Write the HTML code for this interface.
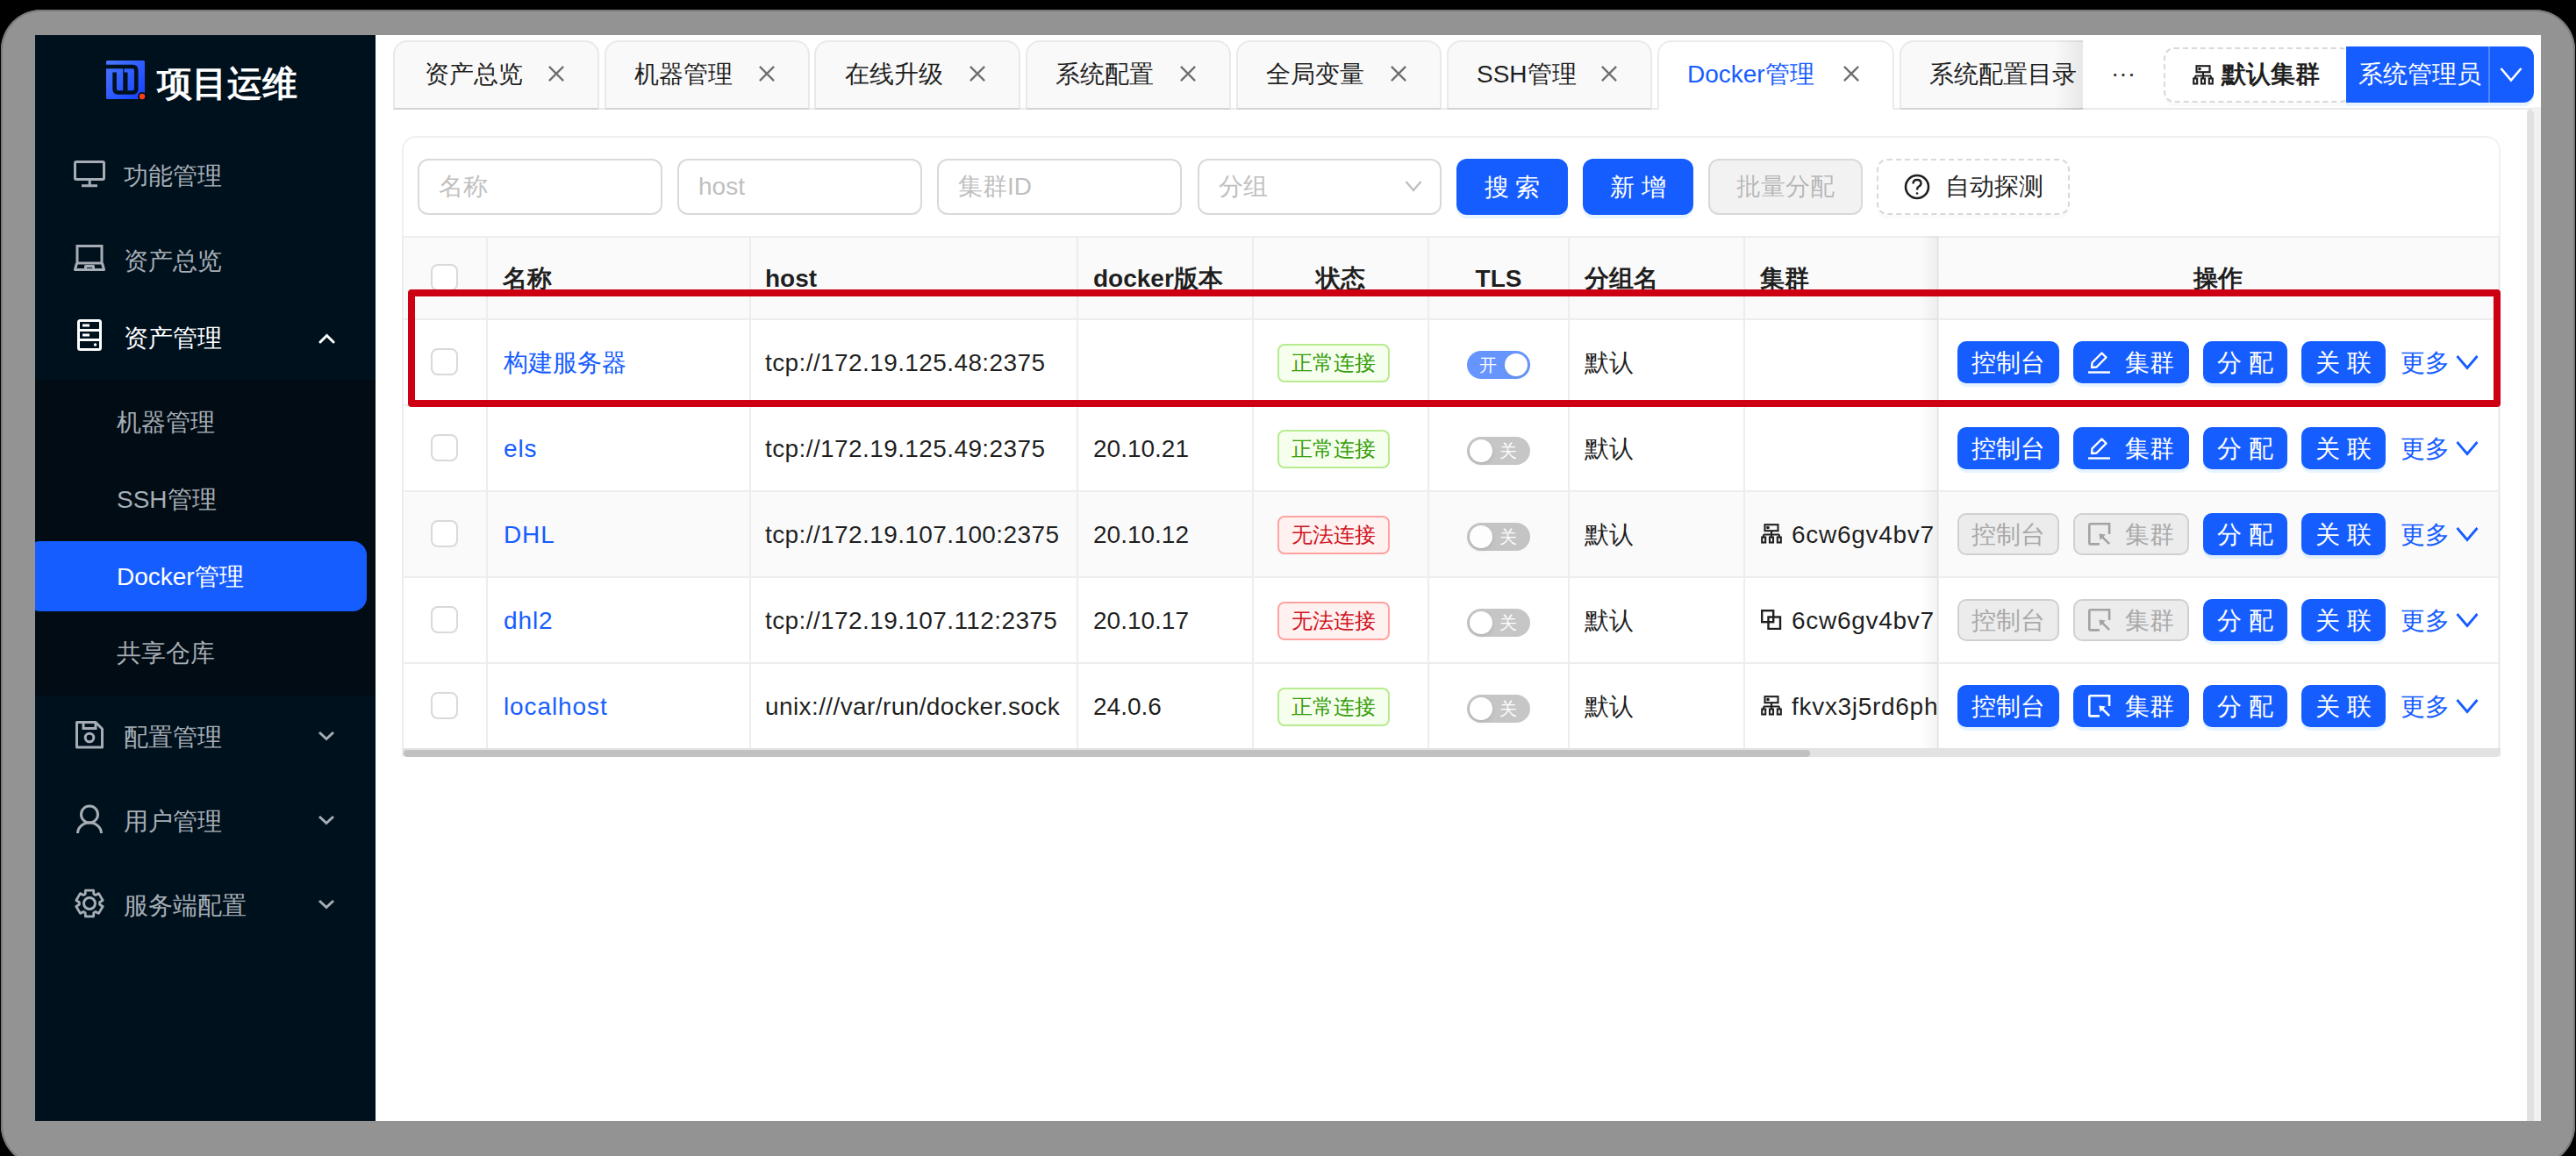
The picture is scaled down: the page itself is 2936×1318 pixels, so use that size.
<!DOCTYPE html>
<html><head><meta charset="utf-8">
<style>
*{box-sizing:border-box;margin:0;padding:0}
html,body{width:2936px;height:1318px;overflow:hidden;background:#000;font-family:"Liberation Sans",sans-serif}
.abs{position:absolute}
#frame{position:absolute;left:1px;top:11px;width:2934px;height:1318px;background:#939393;border-radius:46px;box-shadow:inset 0 0 0 2px #7a7a7a}
#app{position:absolute;left:40px;top:40px;width:2856px;height:1238px;overflow:hidden;background:#fff}
#in{position:absolute;left:-40px;top:-40px;width:2936px;height:1318px}
.t{position:absolute;white-space:nowrap;line-height:1}
/* sidebar */
#side{position:absolute;left:40px;top:40px;width:388px;height:1238px;background:#00111e}
.mi{position:absolute;font-size:28px;color:#a6adb4;white-space:nowrap;line-height:40px;height:40px}
.ico{position:absolute}
/* tabs */
.tab{position:absolute;top:46px;height:79px;background:#f9f9f9;border:2px solid #e9e9e9;border-bottom-color:#d3d3d3;border-radius:16px 16px 0 0}
.tab .tx{position:absolute;top:17px;font-size:28px;line-height:40px;color:rgba(0,0,0,.88);white-space:nowrap}
.tab svg{position:absolute;top:27px}
/* inputs */
.inp{position:absolute;top:181px;height:64px;border:2px solid #d9d9d9;border-radius:12px;background:#fff}
.inp span{position:absolute;left:22px;top:10px;font-size:28px;line-height:40px;color:#bfbfbf;white-space:nowrap}
.btn{position:absolute;height:64px;top:181px;border-radius:12px;font-size:28px;line-height:60px;text-align:center;white-space:nowrap}
.bp{line-height:66px;background:#165dff;color:#fff;box-shadow:0 4px 0 rgba(5,145,255,.1)}
/* table */
.cell{position:absolute;font-size:28px;line-height:40px;white-space:nowrap;color:rgba(0,0,0,.88)}
.hd{font-weight:700}
.vl{position:absolute;width:2px;background:#ededed}
.hl{position:absolute;height:2px;background:#ededed}
.cb{position:absolute;left:491px;width:32px;height:32px;border:2px solid #d9d9d9;border-radius:8px;background:#fff}
.lnk{color:#165dff}
.tag{position:absolute;left:1456px;width:128px;height:44px;border:2px solid;border-radius:8px;font-size:24px;line-height:40px;text-align:center;white-space:nowrap}
.tg{background:#f6ffed;border-color:#b7eb8f;color:#389e0d}
.tr{background:#fff1f0;border-color:#ffa39e;color:#cf1322}
.sw{position:absolute;left:1672px;width:72px;height:32px;border-radius:16px;opacity:.65}
.sw .k{position:absolute;top:3px;width:26px;height:26px;border-radius:50%;background:#fff;box-shadow:0 2px 4px rgba(0,35,11,.2)}
.sw .s{position:absolute;top:0;font-size:20px;line-height:32px;color:#fff}
.ob{position:absolute;height:48px;border-radius:10px;font-size:28px;line-height:50px;text-align:center;white-space:nowrap;color:#fff;background:#165dff;box-shadow:0 4px 0 rgba(5,145,255,.1)}
.od{background:#ececec;color:#a9a9a9;border:2px solid #d0d0d0;box-shadow:none;line-height:46px}
</style></head><body>
<div id="frame"></div>
<div id="app"><div id="in">

<!-- SIDEBAR -->
<div id="side"></div>
<div class="abs" style="left:40px;top:433px;width:388px;height:360px;background:#010c14"></div>
<!-- logo -->
<svg class="ico" style="left:121px;top:69px" width="50" height="50" viewBox="0 0 50 50">
<defs><linearGradient id="lg" x1="0" y1="0" x2="1" y2="1"><stop offset="0" stop-color="#4a78ff"/><stop offset="1" stop-color="#1440ff"/></linearGradient></defs>
<rect x="0" y="0" width="44" height="44" rx="1.5" fill="url(#lg)"/>
<path d="M0 7 H30 Q34.3 7 34.3 11.3 V32.2 Q34.3 36.5 30 36.5 H14 Q9.6 36.5 9.6 32.2 V13.5" stroke="#00111e" stroke-width="4.6" fill="none"/>
<rect x="19.3" y="13.5" width="5.2" height="21.5" fill="#00111e"/>
<rect x="19.3" y="9" width="1.2" height="5" fill="#00111e"/>
<circle cx="41" cy="41" r="5" fill="#00111e"/>
<circle cx="41" cy="41" r="3.2" fill="#ff3d12"/>
</svg>
<div class="t" style="left:179px;top:73px;font-size:40px;line-height:44px;font-weight:700;color:#fff">项目运维</div>

<!-- 功能管理 -->
<svg class="ico" style="left:84px;top:183px" width="36" height="31" viewBox="0 0 36 31" fill="none" stroke="#a6adb4" stroke-width="3">
<rect x="1.5" y="1.5" width="33" height="20" rx="1.5"/><path d="M18.2 23 V28.5 M9 28.8 H27"/></svg>
<div class="mi" style="left:141px;top:181px">功能管理</div>
<!-- 资产总览 -->
<svg class="ico" style="left:84px;top:279px" width="36" height="31" viewBox="0 0 36 31" fill="none" stroke="#a6adb4" stroke-width="3">
<rect x="4" y="1.5" width="28" height="19.5"/><path d="M3.5 21 L1.5 28.5 H34.5 L32.5 21 M13.5 28 V24.5 H22.5 V28" stroke-linejoin="round"/></svg>
<div class="mi" style="left:141px;top:278px">资产总览</div>
<!-- 资产管理 -->
<svg class="ico" style="left:88px;top:364px" width="28" height="36" viewBox="0 0 28 36" fill="none" stroke="#fff" stroke-width="3">
<rect x="1.5" y="1.5" width="25" height="33" rx="2"/><path d="M1.5 12.5 H26.5 M1.5 23.5 H26.5 M6 7 H14 M6 18 H14"/><circle cx="20.5" cy="29" r="1" fill="#fff" stroke-width="1.5"/></svg>
<div class="mi" style="left:141px;top:366px;color:#fff">资产管理</div>
<svg class="ico" style="left:362px;top:379px" width="20" height="14" viewBox="0 0 20 14" fill="none" stroke="#fff" stroke-width="3" stroke-linecap="round"><path d="M3 11 L10.5 3.5 L18 11"/></svg>

<div class="mi" style="left:133px;top:462px">机器管理</div>
<div class="mi" style="left:133px;top:550px">SSH管理</div>
<div class="abs" style="left:30px;top:617px;width:388px;height:80px;background:#165dff;border-radius:16px"></div>
<div class="mi" style="left:133px;top:638px;color:#fff">Docker管理</div>
<div class="mi" style="left:133px;top:725px">共享仓库</div>

<!-- 配置管理 -->
<svg class="ico" style="left:86px;top:822px" width="32" height="32" viewBox="0 0 32 32" fill="none" stroke="#a6adb4" stroke-width="3">
<path d="M1.5 1.5 H23 L30.5 9 V30 H1.5 Z" stroke-linejoin="round"/><path d="M9 1.5 V8.5 H23 V1.5"/><circle cx="16" cy="19" r="4.8"/></svg>
<div class="mi" style="left:141px;top:821px">配置管理</div>
<svg class="ico" style="left:362px;top:832px" width="20" height="14" viewBox="0 0 20 14" fill="none" stroke="#a6adb4" stroke-width="3"><path d="M2 3 L10 10.5 L18 3"/></svg>
<!-- 用户管理 -->
<svg class="ico" style="left:86px;top:917px" width="32" height="34" viewBox="0 0 32 34" fill="none" stroke="#a6adb4" stroke-width="3">
<circle cx="16" cy="11.5" r="9.5"/><path d="M2.5 33 A13.5 12 0 0 1 29.5 33"/></svg>
<div class="mi" style="left:141px;top:917px">用户管理</div>
<svg class="ico" style="left:362px;top:928px" width="20" height="14" viewBox="0 0 20 14" fill="none" stroke="#a6adb4" stroke-width="3"><path d="M2 3 L10 10.5 L18 3"/></svg>
<!-- 服务端配置 -->
<svg class="ico" style="left:85px;top:1012px" width="34" height="36" viewBox="0 0 34 36" fill="none" stroke="#a6adb4" stroke-width="3" stroke-linejoin="round">
<path d="M11.9 6.6 L12.1 2.2 L21.9 2.2 L22.1 6.6 L24.3 7.9 L28.2 5.9 L33.1 14.3 L29.4 16.7 L29.4 19.3 L33.1 21.7 L28.2 30.1 L24.3 28.1 L22.1 29.4 L21.9 33.8 L12.1 33.8 L11.9 29.4 L9.7 28.1 L5.8 30.1 L0.9 21.7 L4.6 19.3 L4.6 16.7 L0.9 14.3 L5.8 5.9 L9.7 7.9Z" transform="translate(17 18) scale(0.94) translate(-17 -18)"/><circle cx="17" cy="18" r="6.5"/></svg>
<div class="mi" style="left:141px;top:1013px">服务端配置</div>
<svg class="ico" style="left:362px;top:1024px" width="20" height="14" viewBox="0 0 20 14" fill="none" stroke="#a6adb4" stroke-width="3"><path d="M2 3 L10 10.5 L18 3"/></svg>

<!--MAIN-->
<!-- TABS -->
<div class="hl" style="left:448px;top:123px;width:2440px;background:#e9e9e9"></div>
<div class="tab" style="left:448px;width:235px"><div class="tx" style="left:34px">资产总览</div><svg width="18" height="18" viewBox="0 0 18 18" style="left:175px" stroke="#6f6f6f" stroke-width="2.3"><path d="M0.9 0.9 L17.1 17.1 M17.1 0.9 L0.9 17.1"/></svg></div>
<div class="tab" style="left:689px;width:234px"><div class="tx" style="left:32px">机器管理</div><svg width="18" height="18" viewBox="0 0 18 18" style="left:174px" stroke="#6f6f6f" stroke-width="2.3"><path d="M0.9 0.9 L17.1 17.1 M17.1 0.9 L0.9 17.1"/></svg></div>
<div class="tab" style="left:928px;width:235px"><div class="tx" style="left:33px">在线升级</div><svg width="18" height="18" viewBox="0 0 18 18" style="left:175px" stroke="#6f6f6f" stroke-width="2.3"><path d="M0.9 0.9 L17.1 17.1 M17.1 0.9 L0.9 17.1"/></svg></div>
<div class="tab" style="left:1169px;width:234px"><div class="tx" style="left:32px">系统配置</div><svg width="18" height="18" viewBox="0 0 18 18" style="left:174px" stroke="#6f6f6f" stroke-width="2.3"><path d="M0.9 0.9 L17.1 17.1 M17.1 0.9 L0.9 17.1"/></svg></div>
<div class="tab" style="left:1409px;width:234px"><div class="tx" style="left:32px">全局变量</div><svg width="18" height="18" viewBox="0 0 18 18" style="left:174px" stroke="#6f6f6f" stroke-width="2.3"><path d="M0.9 0.9 L17.1 17.1 M17.1 0.9 L0.9 17.1"/></svg></div>
<div class="tab" style="left:1649px;width:234px"><div class="tx" style="left:32px">SSH管理</div><svg width="18" height="18" viewBox="0 0 18 18" style="left:174px" stroke="#6f6f6f" stroke-width="2.3"><path d="M0.9 0.9 L17.1 17.1 M17.1 0.9 L0.9 17.1"/></svg></div>
<div class="tab" style="left:1889px;width:270px;height:79px;background:#fff;border-color:#ebebeb;border-bottom:none"><div class="tx" style="left:32px;color:#165dff">Docker管理</div><svg width="18" height="18" viewBox="0 0 18 18" style="left:210px" stroke="#6f6f6f" stroke-width="2.3"><path d="M0.9 0.9 L17.1 17.1 M17.1 0.9 L0.9 17.1"/></svg></div>
<div class="abs" style="left:2165px;top:46px;width:209px;height:79px;overflow:hidden"><div class="tab" style="left:0;top:0;width:260px"><div class="tx" style="left:32px">系统配置目录</div></div><div class="abs" style="left:176px;top:0;width:33px;height:79px;background:linear-gradient(to right,rgba(0,0,0,0),rgba(0,0,0,.07))"></div></div>
<div class="t" style="left:2406px;top:70px;font-size:28px;line-height:28px;color:#333">···</div>
<div class="abs" style="left:2466px;top:54px;width:214px;height:63px;border:2px dashed #d9d9d9;border-radius:12px;background:#fff;box-shadow:0 4px 0 rgba(0,0,0,.02)"></div>
<svg class="ico" style="left:2499px;top:74px" width="24" height="23" viewBox="0 0 24 23" fill="none" stroke="#1f1f1f" stroke-width="2.1"><rect x="4.5" y="1.2" width="15" height="7"/><path d="M12 8.2 V12.5 M3 12.5 H21 M3 12.5 V15.5 M12 12.5 V15.5 M21 12.5 V15.5"/><rect x="1.2" y="15.5" width="4" height="6"/><rect x="10" y="15.5" width="4" height="6"/><rect x="18.8" y="15.5" width="4" height="6"/><circle cx="8" cy="4.5" r="0.8" fill="#1f1f1f"/></svg>
<div class="t" style="left:2532px;top:65px;font-size:28px;line-height:40px;font-weight:700;color:rgba(0,0,0,.88)">默认集群</div>
<div class="abs" style="left:2674px;top:53px;width:214px;height:64px;background:#165dff;border-radius:0 12px 12px 0;box-shadow:0 4px 0 rgba(5,145,255,.1)"></div>
<div class="abs" style="left:2836px;top:53px;width:2px;height:64px;background:#4f86ff"></div>
<div class="t" style="left:2688px;top:65px;font-size:28px;line-height:40px;color:#fff">系统管理员</div>
<svg class="ico" style="left:2849px;top:76px" width="26" height="18" viewBox="0 0 26 18" fill="none" stroke="#fff" stroke-width="2.6"><path d="M1.5 2 L13 15.5 L24.5 2"/></svg>
<div class="abs" style="left:2880px;top:125px;width:8px;height:1160px;background:#e1e1e1;border-radius:4px 4px 0 0"></div>
<div class="abs" style="left:2888px;top:122px;width:8px;height:1160px;background:#f1f1f1"></div>
<!-- CARD -->
<div class="abs" style="left:458px;top:155px;width:2392px;height:708px;border:2px solid #f0f0f0;border-bottom:none;border-radius:16px 16px 0 0"></div>
<div class="inp" style="left:476px;width:279px"><span>名称</span></div>
<div class="inp" style="left:772px;width:279px"><span>host</span></div>
<div class="inp" style="left:1068px;width:279px"><span>集群ID</span></div>
<div class="inp" style="left:1365px;width:278px"><span>分组</span></div>
<svg class="ico" style="left:1601px;top:205px" width="20" height="14" viewBox="0 0 20 14" fill="none" stroke="#bfbfbf" stroke-width="2.4"><path d="M1.5 2 L10 12 L18.5 2"/></svg>
<div class="btn bp" style="left:1660px;width:127px">搜 索</div>
<div class="btn bp" style="left:1804px;width:126px">新 增</div>
<div class="btn" style="left:1947px;width:176px;background:#f2f2f2;border:2px solid #d9d9d9;color:rgba(0,0,0,.25)">批量分配</div>
<div class="btn" style="left:2139px;width:220px;border:2px dashed #d9d9d9;background:#fff;box-shadow:0 4px 0 rgba(0,0,0,.02)"></div>
<svg class="ico" style="left:2170px;top:198px" width="30" height="30" viewBox="0 0 30 30" fill="none" stroke="#1f1f1f" stroke-width="2.6"><circle cx="15" cy="15" r="13"/><path d="M10.5 11.5 Q10.5 7 15 7 Q19.5 7 19.5 11 Q19.5 13.5 16.5 15 Q15 16 15 18.5" stroke-width="2.4"/><circle cx="15" cy="22.5" r="1.3" fill="#1f1f1f" stroke="none"/></svg>
<div class="t" style="left:2217px;top:193px;font-size:28px;line-height:40px;color:rgba(0,0,0,.88)">自动探测</div>
<!-- TABLE -->
<div class="abs" style="left:459px;top:271px;width:2389px;height:93px;background:#fafafa"></div>
<div class="abs" style="left:459px;top:561px;width:2389px;height:96px;background:#fafafa"></div>
<div class="hl" style="left:459px;top:269px;width:2390px"></div>
<div class="hl" style="left:459px;top:363px;width:2390px"></div>
<div class="hl" style="left:459px;top:461px;width:2390px"></div>
<div class="hl" style="left:459px;top:559px;width:2390px"></div>
<div class="hl" style="left:459px;top:657px;width:2390px"></div>
<div class="hl" style="left:459px;top:755px;width:2390px"></div>
<div class="hl" style="left:459px;top:853px;width:2390px"></div>
<div class="vl" style="left:458px;top:271px;height:582px"></div>
<div class="vl" style="left:554px;top:271px;height:582px"></div>
<div class="vl" style="left:854px;top:271px;height:582px"></div>
<div class="vl" style="left:1227px;top:271px;height:582px"></div>
<div class="vl" style="left:1427px;top:271px;height:582px"></div>
<div class="vl" style="left:1627px;top:271px;height:582px"></div>
<div class="vl" style="left:1787px;top:271px;height:582px"></div>
<div class="vl" style="left:1987px;top:271px;height:582px"></div>
<div class="vl" style="left:2208px;top:271px;height:582px"></div>
<div class="vl" style="left:2847px;top:271px;height:582px"></div>
<div class="cb" style="top:301px;width:31px;height:31px"></div>
<div class="cell" style="left:573px;top:298px;font-weight:700">名称</div>
<div class="cell" style="left:872px;top:298px;font-weight:700">host</div>
<div class="cell" style="left:1246px;top:298px;font-weight:700">docker版本</div>
<div class="cell" style="left:1806px;top:298px;font-weight:700">分组名</div>
<div class="cell" style="left:2006px;top:298px;font-weight:700">集群</div>
<div class="cell" style="left:1428px;width:200px;text-align:center;top:298px;font-weight:700">状态</div>
<div class="cell" style="left:1608px;width:200px;text-align:center;top:298px;font-weight:700">TLS</div>
<div class="cell" style="left:2428px;width:200px;text-align:center;top:298px;font-weight:700">操作</div>
<div class="cb" style="top:397px;width:31px;height:31px"></div>
<div class="cell lnk" style="left:574px;top:394px;">构建服务器</div>
<div class="cell" style="left:872px;top:394px;letter-spacing:0.4px">tcp://172.19.125.48:2375</div>
<div class="tag tg" style="top:392px">正常连接</div>
<div class="sw" style="top:400px;background:#165dff"><span class="s" style="left:14px">开</span><div class="k" style="left:43px"></div></div>
<div class="cell" style="left:1806px;top:394px;">默认</div>
<div class="ob" style="left:2231px;top:389px;width:116px">控制台</div>
<div class="ob" style="left:2363px;top:389px;width:132px"><span style="padding-left:42px">集群</span></div>
<svg class="ico" style="left:2380px;top:400px" width="26" height="26" viewBox="0 0 26 26" fill="none" stroke="#fff" stroke-width="2.4" stroke-linejoin="round"><path d="M4 19 L4.5 13.5 L15.5 2.5 L20.5 7.5 L9.5 18.5 Z"/><path d="M0 24.5 H25"/></svg>
<div class="ob" style="left:2511px;top:389px;width:96px">分 配</div>
<div class="ob" style="left:2623px;top:389px;width:96px">关 联</div>
<div class="cell" style="left:2736px;top:394px;color:#165dff">更多</div>
<svg class="ico" style="left:2799px;top:404px" width="26" height="18" viewBox="0 0 26 18" fill="none" stroke="#165dff" stroke-width="2.8"><path d="M1.5 2 L13 15.5 L24.5 2"/></svg>
<div class="cb" style="top:495px;width:31px;height:31px"></div>
<div class="cell lnk" style="left:574px;top:492px;letter-spacing:0.9px">els</div>
<div class="cell" style="left:872px;top:492px;letter-spacing:0.4px">tcp://172.19.125.49:2375</div>
<div class="cell" style="left:1246px;top:492px;">20.10.21</div>
<div class="tag tg" style="top:490px">正常连接</div>
<div class="sw" style="top:498px;background:#a8a8a8"><div class="k" style="left:3px"></div><span class="s" style="left:37px">关</span></div>
<div class="cell" style="left:1806px;top:492px;">默认</div>
<div class="ob" style="left:2231px;top:487px;width:116px">控制台</div>
<div class="ob" style="left:2363px;top:487px;width:132px"><span style="padding-left:42px">集群</span></div>
<svg class="ico" style="left:2380px;top:498px" width="26" height="26" viewBox="0 0 26 26" fill="none" stroke="#fff" stroke-width="2.4" stroke-linejoin="round"><path d="M4 19 L4.5 13.5 L15.5 2.5 L20.5 7.5 L9.5 18.5 Z"/><path d="M0 24.5 H25"/></svg>
<div class="ob" style="left:2511px;top:487px;width:96px">分 配</div>
<div class="ob" style="left:2623px;top:487px;width:96px">关 联</div>
<div class="cell" style="left:2736px;top:492px;color:#165dff">更多</div>
<svg class="ico" style="left:2799px;top:502px" width="26" height="18" viewBox="0 0 26 18" fill="none" stroke="#165dff" stroke-width="2.8"><path d="M1.5 2 L13 15.5 L24.5 2"/></svg>
<div class="cb" style="top:593px;width:31px;height:31px"></div>
<div class="cell lnk" style="left:574px;top:590px;letter-spacing:0.9px">DHL</div>
<div class="cell" style="left:872px;top:590px;letter-spacing:0.4px">tcp://172.19.107.100:2375</div>
<div class="cell" style="left:1246px;top:590px;">20.10.12</div>
<div class="tag tr" style="top:588px">无法连接</div>
<div class="sw" style="top:596px;background:#a8a8a8"><div class="k" style="left:3px"></div><span class="s" style="left:37px">关</span></div>
<div class="cell" style="left:1806px;top:590px;">默认</div>
<svg class="ico" style="left:2007px;top:597px" width="24" height="23" viewBox="0 0 24 23" fill="none" stroke="#1f1f1f" stroke-width="2.1"><rect x="4.5" y="1.2" width="15" height="7"/><path d="M12 8.2 V12.5 M3 12.5 H21 M3 12.5 V15.5 M12 12.5 V15.5 M21 12.5 V15.5"/><rect x="1.2" y="15.5" width="4" height="6"/><rect x="10" y="15.5" width="4" height="6"/><rect x="18.8" y="15.5" width="4" height="6"/><circle cx="8" cy="4.5" r="0.8" fill="#1f1f1f"/></svg>
<div class="abs" style="left:2042px;top:590px;width:166px;height:40px;overflow:hidden"><div class="cell" style="left:0;top:0;letter-spacing:0.7px">6cw6gv4bv7</div></div>
<div class="ob od" style="left:2231px;top:585px;width:116px">控制台</div>
<div class="ob od" style="left:2363px;top:585px;width:132px"><span style="padding-left:42px">集群</span></div>
<svg class="ico" style="left:2380px;top:596px" width="26" height="26" viewBox="0 0 26 26" fill="none" stroke="#a3a3a3" stroke-width="2.6"><path d="M12.9 24.4 H2.6 Q1.3 24.4 1.3 23.1 V2.6 Q1.3 1.3 2.6 1.3 H24.1 V12.9"/><path d="M24.2 24.2 L15.8 15.8"/><path d="M12.4 12.4 L19.8 13.6 L13.6 19.8 Z" fill="#a3a3a3" stroke="none"/></svg>
<div class="ob" style="left:2511px;top:585px;width:96px">分 配</div>
<div class="ob" style="left:2623px;top:585px;width:96px">关 联</div>
<div class="cell" style="left:2736px;top:590px;color:#165dff">更多</div>
<svg class="ico" style="left:2799px;top:600px" width="26" height="18" viewBox="0 0 26 18" fill="none" stroke="#165dff" stroke-width="2.8"><path d="M1.5 2 L13 15.5 L24.5 2"/></svg>
<div class="cb" style="top:691px;width:31px;height:31px"></div>
<div class="cell lnk" style="left:574px;top:688px;letter-spacing:0.9px">dhl2</div>
<div class="cell" style="left:872px;top:688px;letter-spacing:0.4px">tcp://172.19.107.112:2375</div>
<div class="cell" style="left:1246px;top:688px;">20.10.17</div>
<div class="tag tr" style="top:686px">无法连接</div>
<div class="sw" style="top:694px;background:#a8a8a8"><div class="k" style="left:3px"></div><span class="s" style="left:37px">关</span></div>
<div class="cell" style="left:1806px;top:688px;">默认</div>
<svg class="ico" style="left:2007px;top:695px" width="24" height="23" viewBox="0 0 24 23" fill="none" stroke="#1f1f1f" stroke-width="2.4"><rect x="1.2" y="1.2" width="13" height="13"/><rect x="8.5" y="8.5" width="13.5" height="13.5"/></svg>
<div class="abs" style="left:2042px;top:688px;width:166px;height:40px;overflow:hidden"><div class="cell" style="left:0;top:0;letter-spacing:0.7px">6cw6gv4bv7</div></div>
<div class="ob od" style="left:2231px;top:683px;width:116px">控制台</div>
<div class="ob od" style="left:2363px;top:683px;width:132px"><span style="padding-left:42px">集群</span></div>
<svg class="ico" style="left:2380px;top:694px" width="26" height="26" viewBox="0 0 26 26" fill="none" stroke="#a3a3a3" stroke-width="2.6"><path d="M12.9 24.4 H2.6 Q1.3 24.4 1.3 23.1 V2.6 Q1.3 1.3 2.6 1.3 H24.1 V12.9"/><path d="M24.2 24.2 L15.8 15.8"/><path d="M12.4 12.4 L19.8 13.6 L13.6 19.8 Z" fill="#a3a3a3" stroke="none"/></svg>
<div class="ob" style="left:2511px;top:683px;width:96px">分 配</div>
<div class="ob" style="left:2623px;top:683px;width:96px">关 联</div>
<div class="cell" style="left:2736px;top:688px;color:#165dff">更多</div>
<svg class="ico" style="left:2799px;top:698px" width="26" height="18" viewBox="0 0 26 18" fill="none" stroke="#165dff" stroke-width="2.8"><path d="M1.5 2 L13 15.5 L24.5 2"/></svg>
<div class="cb" style="top:789px;width:31px;height:31px"></div>
<div class="cell lnk" style="left:574px;top:786px;letter-spacing:0.9px">localhost</div>
<div class="cell" style="left:872px;top:786px;letter-spacing:0.4px">unix:///var/run/docker.sock</div>
<div class="cell" style="left:1246px;top:786px;">24.0.6</div>
<div class="tag tg" style="top:784px">正常连接</div>
<div class="sw" style="top:792px;background:#a8a8a8"><div class="k" style="left:3px"></div><span class="s" style="left:37px">关</span></div>
<div class="cell" style="left:1806px;top:786px;">默认</div>
<svg class="ico" style="left:2007px;top:793px" width="24" height="23" viewBox="0 0 24 23" fill="none" stroke="#1f1f1f" stroke-width="2.1"><rect x="4.5" y="1.2" width="15" height="7"/><path d="M12 8.2 V12.5 M3 12.5 H21 M3 12.5 V15.5 M12 12.5 V15.5 M21 12.5 V15.5"/><rect x="1.2" y="15.5" width="4" height="6"/><rect x="10" y="15.5" width="4" height="6"/><rect x="18.8" y="15.5" width="4" height="6"/><circle cx="8" cy="4.5" r="0.8" fill="#1f1f1f"/></svg>
<div class="abs" style="left:2042px;top:786px;width:166px;height:40px;overflow:hidden"><div class="cell" style="left:0;top:0;letter-spacing:0.7px">fkvx3j5rd6ph</div></div>
<div class="ob" style="left:2231px;top:781px;width:116px">控制台</div>
<div class="ob" style="left:2363px;top:781px;width:132px"><span style="padding-left:42px">集群</span></div>
<svg class="ico" style="left:2380px;top:792px" width="26" height="26" viewBox="0 0 26 26" fill="none" stroke="#fff" stroke-width="2.6"><path d="M12.9 24.4 H2.6 Q1.3 24.4 1.3 23.1 V2.6 Q1.3 1.3 2.6 1.3 H24.1 V12.9"/><path d="M24.2 24.2 L15.8 15.8"/><path d="M12.4 12.4 L19.8 13.6 L13.6 19.8 Z" fill="#fff" stroke="none"/></svg>
<div class="ob" style="left:2511px;top:781px;width:96px">分 配</div>
<div class="ob" style="left:2623px;top:781px;width:96px">关 联</div>
<div class="cell" style="left:2736px;top:786px;color:#165dff">更多</div>
<svg class="ico" style="left:2799px;top:796px" width="26" height="18" viewBox="0 0 26 18" fill="none" stroke="#165dff" stroke-width="2.8"><path d="M1.5 2 L13 15.5 L24.5 2"/></svg>
<div class="abs" style="left:2189px;top:269px;width:20px;height:584px;background:linear-gradient(to left,rgba(0,0,0,.05),rgba(0,0,0,0))"></div>
<div class="abs" style="left:459px;top:853px;width:2391px;height:10px;background:#e2e2e2;border-radius:0 0 5px 5px"></div>
<div class="abs" style="left:460px;top:855px;width:1603px;height:8px;background:#c1c1c1;border-radius:4px"></div>
<div class="abs" style="left:465px;top:330px;width:2385px;height:134px;border:8px solid #cc0012;border-radius:4px"></div>
<!--/MAIN-->
</div></div>
</body></html>
